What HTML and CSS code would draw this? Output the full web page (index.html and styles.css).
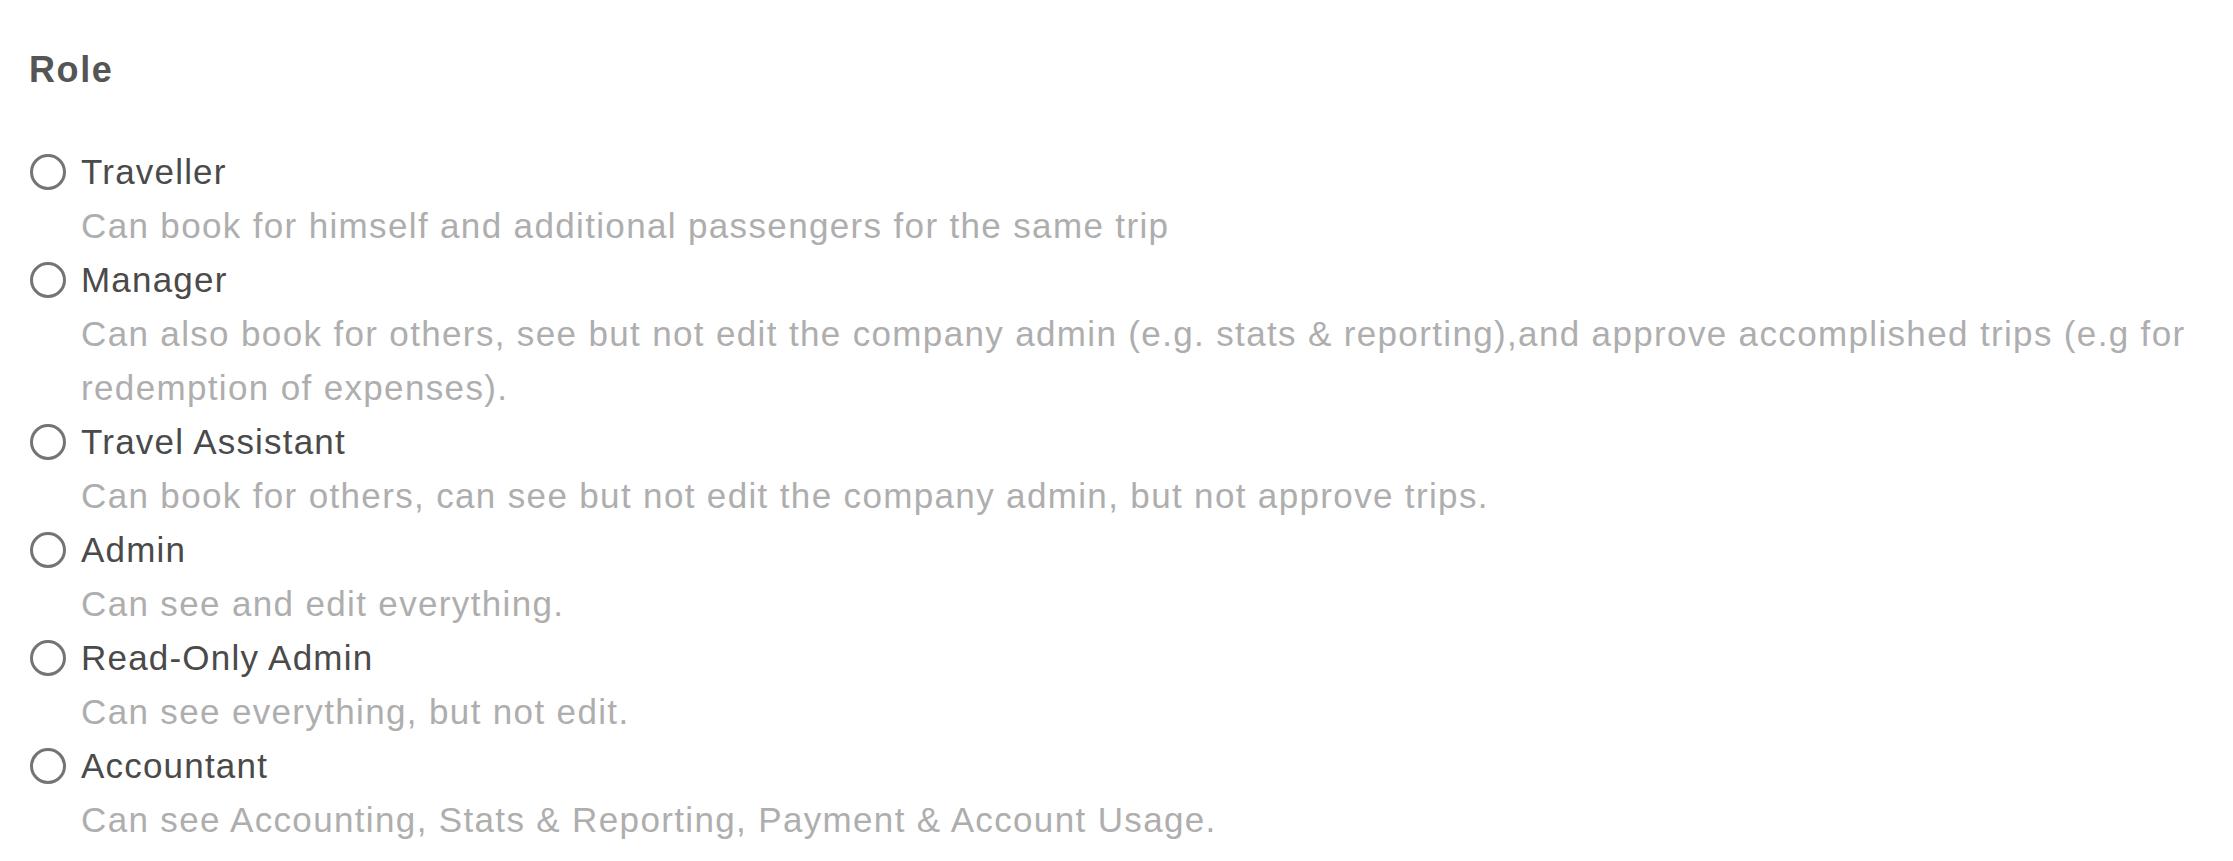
FILE: index.html
```html
<!DOCTYPE html>
<html lang="en">
<head>
    <meta charset="UTF-8">
    <title>Role</title>
    <link rel="stylesheet" href="styles.css">
</head>
<body>
    <div class="roleForm">
        <h2 class="roleTitle">Role</h2>
        <div class="roleList">
            <label class="roleOption">
                <span class="radio"></span>
                <span class="roleName">Traveller</span>
            </label>
            <p class="roleDesc">Can book for himself and additional passengers for the same trip</p>

            <label class="roleOption">
                <span class="radio"></span>
                <span class="roleName">Manager</span>
            </label>
            <p class="roleDesc">Can also book for others, see but not edit the company admin (e.g. stats &amp; reporting),and approve accomplished trips (e.g for redemption of expenses).</p>

            <label class="roleOption">
                <span class="radio"></span>
                <span class="roleName">Travel Assistant</span>
            </label>
            <p class="roleDesc">Can book for others, can see but not edit the company admin, but not approve trips.</p>

            <label class="roleOption">
                <span class="radio"></span>
                <span class="roleName">Admin</span>
            </label>
            <p class="roleDesc">Can see and edit everything.</p>

            <label class="roleOption">
                <span class="radio"></span>
                <span class="roleName">Read-Only Admin</span>
            </label>
            <p class="roleDesc">Can see everything, but not edit.</p>

            <label class="roleOption">
                <span class="radio"></span>
                <span class="roleName">Accountant</span>
            </label>
            <p class="roleDesc">Can see Accounting, Stats &amp; Reporting, Payment &amp; Account Usage.</p>
        </div>
    </div>
</body>
</html>
```

FILE: styles.css
```css
body {
    margin: 0;
    padding: 0;
    background-color: #ffffff;
    font-family: "Liberation Sans", Arial, sans-serif;
}

.roleForm {
    padding: 43px 29px 0 29px;
}

.roleTitle {
    margin: 0 0 48px 0;
    font-size: 36px;
    line-height: 54px;
    font-weight: bold;
    letter-spacing: 1.6px;
    color: #555555;
}

.roleOption {
    display: flex;
    align-items: center;
    height: 54px;
    cursor: pointer;
}

.radio {
    box-sizing: border-box;
    width: 36px;
    height: 36px;
    border: 3.5px solid #747474;
    border-radius: 50%;
    margin-left: 1px;
    margin-right: 15px;
}

.roleName {
    font-size: 35px;
    line-height: 54px;
    letter-spacing: 1.2px;
    color: #4a4a4a;
}

.roleDesc {
    margin: 0;
    padding-left: 52px;
    font-size: 35px;
    line-height: 54px;
    letter-spacing: 1.35px;
    color: #aeaeae;
}
```
